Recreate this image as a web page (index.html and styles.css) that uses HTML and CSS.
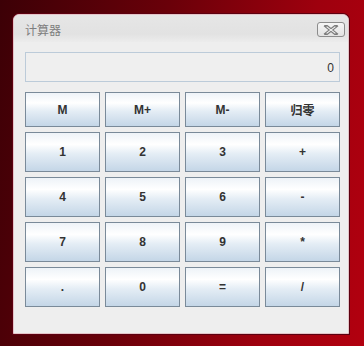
FILE: index.html
```html
<!DOCTYPE html>
<html lang="zh">
<head>
    <meta charset="UTF-8">
    <title>计算器</title>
    <link rel="stylesheet" href="styles.css">
</head>
<body>
    <div class="window">
        <div class="title-bar">
            <span class="title">计算器</span>
            <button class="close" aria-label="关闭">
                <svg width="16" height="10" viewBox="0 0 16 10">
                    <path d="M3 1 L13 9 M13 1 L3 9" stroke="#7c7c7c" stroke-width="3.4" stroke-linecap="square"/>
                    <path d="M3.6 1.6 L12.4 8.4 M12.4 1.6 L3.6 8.4" stroke="#f4f4f4" stroke-width="1.2"/>
                </svg>
            </button>
        </div>
        <div class="content">
            <div class="display">0</div>
            <div class="buttons">
                <button>M</button>
                <button>M+</button>
                <button>M-</button>
                <button class="cjk">归零</button>
                <button>1</button>
                <button>2</button>
                <button>3</button>
                <button>+</button>
                <button>4</button>
                <button>5</button>
                <button>6</button>
                <button>-</button>
                <button>7</button>
                <button>8</button>
                <button>9</button>
                <button>*</button>
                <button>.</button>
                <button>0</button>
                <button>=</button>
                <button>/</button>
            </div>
        </div>
    </div>
</body>
</html>
```

FILE: styles.css
```css
html, body {
    height: 100%;
}

body {
    margin: 0;
    overflow: hidden;
    font-family: "Liberation Sans", "Noto Sans CJK SC", sans-serif;
    background: linear-gradient(100deg, #3c0006 0%, #6a0009 40%, #9e000e 75%, #b2000f 100%);
}

.window {
    margin: 14px 0 0 13px;
    width: 334px;
    height: 318px;
    border: 1px solid #e4c4c8;
    border-radius: 6px 6px 0 0;
    box-shadow: 0 0 0 1px #5c0010;
    background-color: #eeeeee;
    display: flex;
    flex-direction: column;
}

.title-bar {
    height: 27px;
    display: flex;
    align-items: center;
    justify-content: space-between;
    padding: 0 3px 0 11px;
    border-radius: 5px 5px 0 0;
    background: linear-gradient(to bottom, #e6e6e6 0%, #e2e2e2 70%, #ececec 100%);
}

.title {
    font-family: "Noto Sans CJK SC", sans-serif;
    font-size: 12px;
    color: #7e7e7e;
    margin-top: 2px;
}

.close {
    width: 28px;
    height: 15px;
    padding: 0;
    margin-top: 2px;
    border: 1px solid #8c8c8c;
    border-radius: 3px;
    background: linear-gradient(to bottom, #f6f6f6, #e2e2e2);
    display: flex;
    align-items: center;
    justify-content: center;
}

.content {
    padding: 10px 8px 0 11px;
}

.display {
    height: 28px;
    border: 1px solid #bccbd9;
    background-color: #efefef;
    text-align: right;
    padding-right: 5px;
    line-height: 30px;
    font-size: 12px;
    color: #333333;
    margin-bottom: 10px;
}

.buttons {
    display: grid;
    grid-template-columns: repeat(4, 75px);
    grid-template-rows: 35px repeat(4, 40px);
    gap: 5px;
}

.buttons button {
    border: 1px solid #7a8a99;
    padding: 0;
    font-family: "Liberation Sans", sans-serif;
    font-weight: bold;
    font-size: 12px;
    color: #333333;
    background: linear-gradient(to bottom, #eef3f8 0%, #ffffff 30%, #e4edf5 55%, #c4d6e7 100%);
}

.buttons .cjk {
    font-family: "Noto Sans CJK SC", sans-serif;
    font-size: 12px;
}
```
